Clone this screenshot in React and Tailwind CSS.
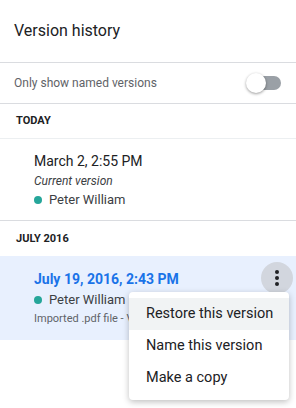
import { useState } from "react";

const Author = ({ name, className = "" }) => (
  <div className={`flex h-[16px] items-center gap-[7px] text-[13px] text-[#3c4043] ${className}`}>
    <span className="h-[8px] w-[8px] rounded-full bg-[#26a69a]" />
    {name}
  </div>
);

const App = () => {
  const [namedOnly, setNamedOnly] = useState(false);

  return (
    <div className="relative h-[408px] w-[296px] overflow-hidden bg-white font-['Roboto',sans-serif] text-[#202124]">
      {/* header */}
      <div className="flex h-[63px] items-center border-b border-[#dadce0] px-[14px]">
        <h1 className="text-[16px] text-[#202124]">Version history</h1>
      </div>

      <div className="flex h-[41px] items-center justify-between border-b border-[#dadce0] pl-[14px] pr-[14px]">
        <span className="text-[12px] text-[#5f6368]">Only show named versions</span>
        <button
          type="button"
          onClick={() => setNamedOnly(!namedOnly)}
          className="relative h-[20px] w-[36px]"
        >
          <span className="absolute left-[3px] top-[3px] h-[14px] w-[32px] rounded-full bg-[#9aa0a6]" />
          <span className="absolute left-0 top-0 h-[20px] w-[20px] rounded-full bg-white shadow-[0_1px_3px_rgba(0,0,0,0.4)]" />
        </button>
      </div>

      {/* today */}
      <div className="flex h-[35px] items-center border-b border-[#eceff1] px-[16px] pt-[1px] text-[11px] font-bold text-[#202124]">
        TODAY
      </div>
      <div className="h-[82px] border-b border-[#dadce0] pl-[34px] pt-[12px]">
        <p className="text-[14px] leading-[20px]">March 2, 2:55 PM</p>
        <p className="mt-[2px] text-[12px] italic leading-[16px] text-[#3c4043]">Current version</p>
        <Author name="Peter William" className="mt-[3px]" />
      </div>

      {/* july 2016 */}
      <div className="flex h-[35px] items-center px-[16px] pt-[2px] text-[11px] font-bold text-[#202124]">
        JULY 2016
      </div>
      <div className="flex h-[84px] items-start justify-between bg-[#e8f0fe] pl-[34px] pr-[3px] pt-[6px]">
        <div className="pt-[8px]">
          <p className="text-[14px] font-bold leading-[18px] text-[#1a73e8]">July 19, 2016, 2:43 PM</p>
          <Author name="Peter William" className="mt-[4px]" />
          <p className="mt-[4px] text-[11px] leading-[14px] text-[#5f6368]">Imported .pdf file - Version 1</p>
        </div>
        <button
          type="button"
          className="flex h-[32px] w-[32px] items-center justify-center rounded-full bg-[#d2d6de]"
        >
          <svg width="4" height="16" viewBox="0 0 4 16" fill="#202124">
            <circle cx="2" cy="2" r="2" />
            <circle cx="2" cy="8" r="2" />
            <circle cx="2" cy="14" r="2" />
          </svg>
        </button>
      </div>

      {/* menu */}
      <div className="absolute left-[129px] top-[292px] w-[160px] rounded-[4px] bg-white py-[6px] shadow-[0_2px_6px_rgba(0,0,0,0.25)]">
        {["Restore this version", "Name this version", "Make a copy"].map((label, i) => (
          <div
            key={label}
            className={`flex h-[32px] items-center whitespace-nowrap px-[17px] text-[14.5px] text-[#202124] ${
              i === 0 ? "bg-[#f1f3f4]" : ""
            }`}
          >
            {label}
          </div>
        ))}
      </div>
    </div>
  );
};

export default App;
